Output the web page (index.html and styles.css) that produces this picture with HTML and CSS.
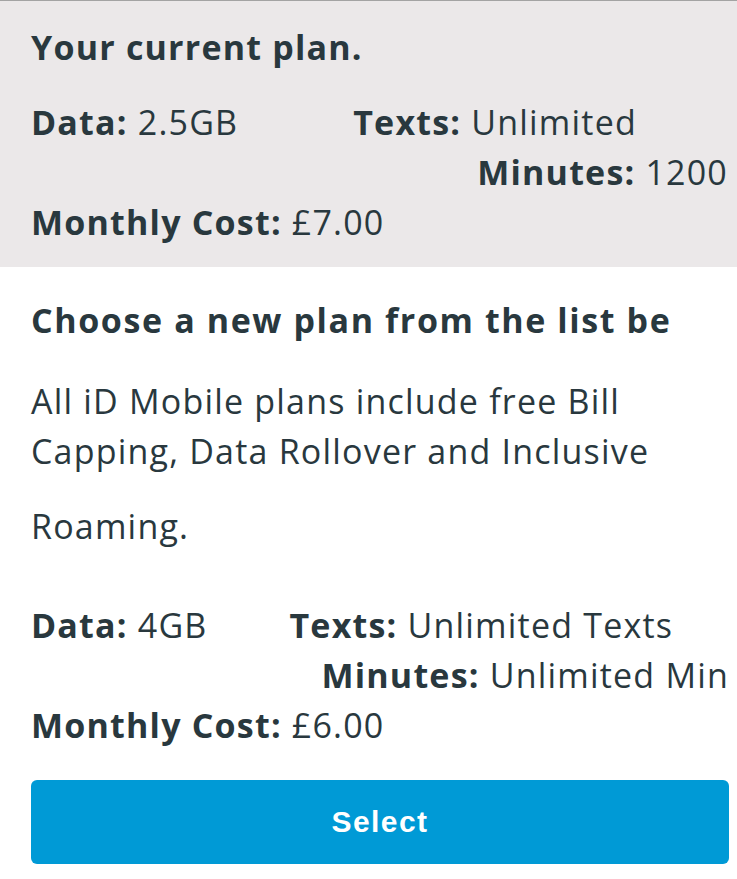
FILE: index.html
```html
<!DOCTYPE html>
<html lang="en">
<head>
  <meta charset="UTF-8" />
  <title>Change Plan - iD Mobile</title>
  <link rel="stylesheet" href="styles.css">
</head>
<body>

<div class="current">
  <h2 class="plan-title">Your current plan.</h2>
  <div class="spec-row">
    <span class="spec"><b>Data:</b> 2.5GB</span>
    <span class="spec texts-current"><b>Texts:</b> Unlimited</span>
  </div>
  <div class="spec-row right">
    <span class="spec"><b>Minutes:</b> 1200</span>
  </div>
  <div class="spec-row">
    <span class="spec"><b>Monthly Cost:</b> £7.00</span>
  </div>
</div>

<div class="choose">
  <h2 class="choose-title">Choose a new plan from the list be</h2>
  <p class="intro">All iD Mobile plans include free Bill Capping, Data Rollover and Inclusive</p>
  <p class="intro roaming">Roaming.</p>

  <div class="plan">
    <div class="spec-row">
      <span class="spec"><b>Data:</b> 4GB</span>
      <span class="spec texts-new"><b>Texts:</b> Unlimited Texts</span>
    </div>
    <div class="spec-row right">
      <span class="spec"><b>Minutes:</b> Unlimited Min</span>
    </div>
    <div class="spec-row">
      <span class="spec"><b>Monthly Cost:</b> £6.00</span>
    </div>
    <button class="select-btn">Select</button>
  </div>
</div>

</body>
</html>
```

FILE: styles.css
```css
body {
  font-family: "Open Sans", Lato, sans-serif;
  color: #29383e;
  background: white;
  margin: 0;
  padding: 0;
  letter-spacing: 1.2px;
}

.current {
  background: #ebe8e9;
  border-top: 1px solid #a3a3a3;
  padding: 21px 9px 20px 31px;
}

.plan-title {
  font-size: 34px;
  line-height: 50px;
  font-weight: bold;
  margin: 0 0 25px;
}

.spec-row {
  display: flex;
  font-size: 34px;
  line-height: 50px;
  white-space: nowrap;
}

.spec-row.right {
  justify-content: flex-end;
}

.spec b {
  font-weight: bold;
}

.texts-current {
  margin-left: 115px;
}

.texts-new {
  margin-left: 82px;
}

.choose {
  padding: 28px 8px 16px 31px;
}

.choose-title {
  font-size: 34px;
  line-height: 50px;
  font-weight: bold;
  letter-spacing: 1.6px;
  margin: 0 0 31px;
  white-space: nowrap;
  overflow: hidden;
}

.intro {
  font-size: 34px;
  line-height: 50px;
  margin: 0;
}

.intro.roaming {
  margin-top: 25px;
}

.plan {
  margin-top: 49px;
}

.select-btn {
  display: block;
  width: 100%;
  height: 84px;
  margin-top: 30px;
  background: #009ad6;
  color: white;
  border: none;
  border-radius: 6px;
  font-family: "Liberation Sans", Arial, sans-serif;
  font-size: 30px;
  font-weight: bold;
  letter-spacing: 1.4px;
  cursor: pointer;
}
```
